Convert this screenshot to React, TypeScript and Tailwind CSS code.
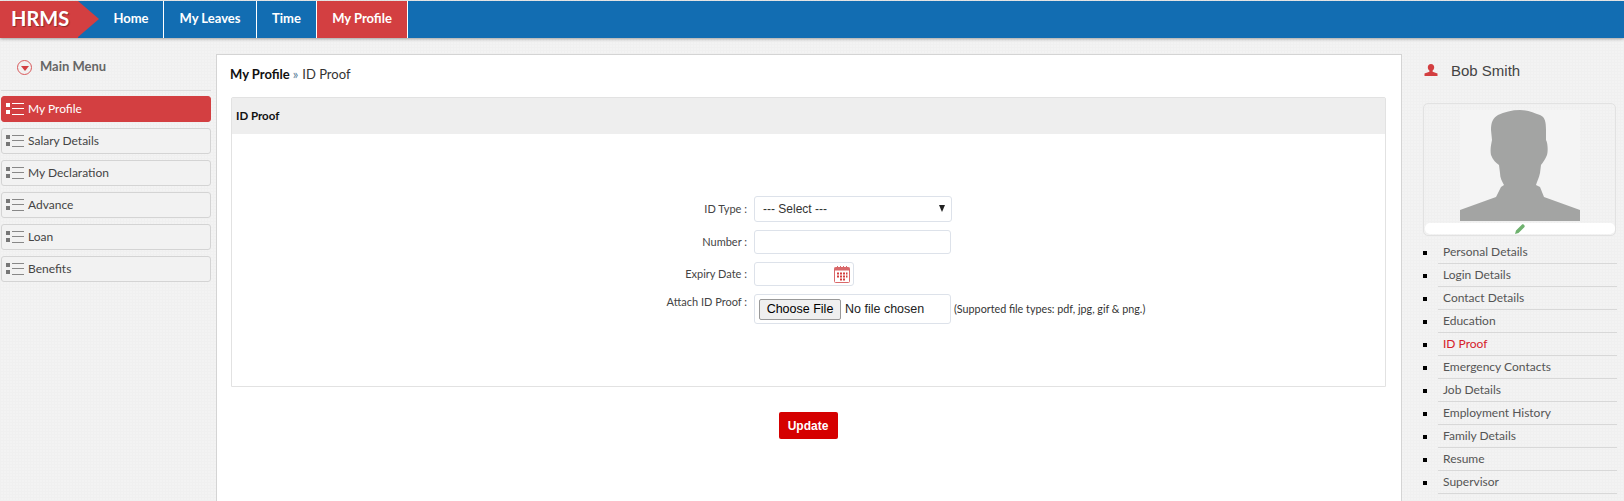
const lato = "font-['Lato','Open_Sans',sans-serif]";

const nav = [
  { label: "Home", w: "w-[65px]" },
  { label: "My Leaves", w: "w-[93px]" },
  { label: "Time", w: "w-[60px]" },
  { label: "My Profile", w: "w-[91px]", active: true },
];

const menu = ["My Profile", "Salary Details", "My Declaration", "Advance", "Loan", "Benefits"];

const links = [
  "Personal Details",
  "Login Details",
  "Contact Details",
  "Education",
  "ID Proof",
  "Emergency Contacts",
  "Job Details",
  "Employment History",
  "Family Details",
  "Resume",
  "Supervisor",
];

const ListIcon = ({ active }: { active: boolean }) => (
  <svg width="18" height="12" viewBox="0 0 18 12" aria-hidden className="shrink-0">
    <g fill={active ? "#fff" : "#777"}>
      <rect x="0" y="0" width="4" height="4" />
      <rect x="0" y="7" width="4" height="4" />
    </g>
    <g fill={active ? "#fff" : "#888"}>
      <rect x="6" y="0" width="12" height="1" />
      <rect x="6" y="5" width="12" height="1" />
      <rect x="6" y="11" width="12" height="1" />
    </g>
  </svg>
);

const Silhouette = () => (
  <svg width="120" height="111" viewBox="0 0 120 111" aria-hidden className="block">
    <path
      fill="#a3a4a3"
      d="M60 0C68 0 74 3 80 5C85 7 86 12 86 20L86 30C88 33 88 42 87 45C85 50 83 52 81 55L80 63C79 68 77 71 76 75L80 77L84 87L120 100L120 111L0 111L0 100L36 87L41 77L44 75C42 71 40 68 40 63L39 55C36 53 33 50 31 45C30 40 31 35 32 30L31 20C31 12 33 8 38 5C44 2 52 0 60 0Z"
    />
  </svg>
);

const CalendarIcon = () => (
  <svg width="16" height="17" viewBox="0 0 16 17" aria-hidden>
    <rect x="0.5" y="1.5" width="15" height="15" rx="1" fill="#fff" stroke="#d9686a" />
    <rect x="0.5" y="1.5" width="15" height="3" fill="#d9686a" />
    <g fill="#d9686a">
      <rect x="3" y="0" width="1" height="2" />
      <rect x="6" y="0" width="1" height="2" />
      <rect x="9" y="0" width="1" height="2" />
      <rect x="12" y="0" width="1" height="2" />
    </g>
    <g fill="#d43f3f">
      <rect x="3" y="6.5" width="2" height="2" />
      <rect x="6" y="6.5" width="2" height="2" />
      <rect x="9" y="6.5" width="2" height="2" />
      <rect x="12" y="6.5" width="1.5" height="2" />
      <rect x="3" y="9.5" width="2" height="2" />
      <rect x="6" y="9.5" width="2" height="2" />
      <rect x="9" y="9.5" width="2" height="2" />
      <rect x="12" y="9.5" width="1.5" height="2" />
      <rect x="6" y="12.5" width="2" height="2" />
      <rect x="9" y="12.5" width="2" height="2" />
    </g>
  </svg>
);

const labelCls = "w-[522px] shrink-0 pr-[7px] text-right text-[11px] text-[#444]";
const fieldCls = "rounded-[3px] border border-[#dde2ea] bg-white";

export default function App() {
  return (
    <div
      className={`${lato} flex h-[501px] w-[1624px] flex-col overflow-hidden bg-[#f3f3f3] bg-[repeating-linear-gradient(0deg,#f0f0f0_0px,#f0f0f0_1px,transparent_1px,transparent_3px),repeating-linear-gradient(90deg,#f0f0f0_0px,#f0f0f0_1px,transparent_1px,transparent_3px)]`}
    >
      {/* top bar */}
      <header className="mt-px flex h-[37px] shrink-0 items-stretch bg-[#126db2] shadow-[0_1px_3px_rgba(0,0,0,0.35)]">
        <div className="relative flex w-[78px] shrink-0 items-center bg-[#d33f41] pb-[3px] pl-[11px] text-[20px] font-bold text-white [text-shadow:1px_1px_1px_rgba(0,0,0,0.35)]">
          HRMS
          <span className="absolute left-full top-0 h-0 w-0 border-y-[18.5px] border-l-[21px] border-y-transparent border-l-[#d33f41]" />
        </div>
        <nav className="ml-[21px] flex">
          {nav.map((n) => (
            <a
              key={n.label}
              className={`flex ${n.w} items-center justify-center border-r border-white pb-px text-[13px] font-bold text-white ${n.active ? "bg-[#d33f41]" : ""}`}
            >
              {n.label}
            </a>
          ))}
        </nav>
      </header>

      <div className="flex min-h-0 flex-1">
        {/* left menu */}
        <aside className="w-[216px] shrink-0 pl-px pr-[5px]">
          <div className="h-[53px] border-b border-[#dcdcdc] pl-[16px] pt-[19px]">
            <div className="flex h-[20px] items-center gap-[8px]">
              <span className="flex h-[15px] w-[15px] items-center justify-center rounded-full border border-[#d9595b]">
                <span className="mt-[2px] h-0 w-0 border-x-[4px] border-t-[5px] border-x-transparent border-t-[#d33f41]" />
              </span>
              <span className="text-[13px] font-bold text-[#666]">Main Menu</span>
            </div>
          </div>
          <ul className="mt-[5px] flex flex-col gap-[6px]">
            {menu.map((m, i) => (
              <li
                key={m}
                className={`flex h-[26px] items-center gap-[4px] rounded-[3px] border pl-[4px] text-[12px] ${
                  i === 0
                    ? "border-[#d33f41] bg-[#d33f41] text-white"
                    : "border-[#d4d4d4] bg-[#f2f2f2] text-[#444]"
                }`}
              >
                <ListIcon active={i === 0} />
                {m}
              </li>
            ))}
          </ul>
        </aside>

        {/* main panel */}
        <main className="mt-[16px] w-[1186px] shrink-0 border-x border-t border-[#d4d4d4] bg-white pl-[14px] pr-[15px]">
          <h1 className="-ml-px flex h-[42px] items-center pb-[3px] text-[13px] text-[#333]">
            <b className="font-bold text-[#111]">My Profile</b>
            <span className="ml-[3px] mr-[4px] text-[#5d7f9a]">»</span>
            ID Proof
          </h1>
          <section className="h-[290px] rounded-t-[2px] border border-[#e2e2e2]">
            <div className="flex h-[36px] items-center bg-[#eeeeee] pl-[4px] text-[11.5px] font-bold text-[#111]">
              ID Proof
            </div>
            <div className="flex flex-col pt-[61px]">
              <div className="flex items-center">
                <label className={`${labelCls} pt-px`}>ID Type :</label>
                <div className="relative">
                  <select
                    className={`${fieldCls} h-[26px] w-[198px] appearance-none pl-[8px] font-['Liberation_Sans',sans-serif] text-[12px] text-[#333]`}
                  >
                    <option>--- Select ---</option>
                  </select>
                  <span className="pointer-events-none absolute right-[7px] top-[10px] h-0 w-0 border-x-[3.5px] border-t-[7px] border-x-transparent border-t-[#222]" />
                </div>
              </div>
              <div className="mt-[8px] flex items-center">
                <label className={labelCls}>Number :</label>
                <input className={`${fieldCls} h-[24px] w-[197px]`} />
              </div>
              <div className="mt-[8px] flex items-center">
                <label className={labelCls}>Expiry Date :</label>
                <div className={`${fieldCls} flex h-[24px] w-[100px] items-center justify-end pr-[3px]`}>
                  <CalendarIcon />
                </div>
              </div>
              <div className="mt-[8px] flex items-start">
                <label className={labelCls}>Attach ID Proof :</label>
                <input
                  type="file"
                  className={`${fieldCls} h-[30px] w-[197px] pl-[4px] pt-[4px] font-['Liberation_Sans',sans-serif] text-[12.5px] text-[#222] file:mr-[4px] file:h-[21px] file:w-[82px] file:rounded-[2px] file:border file:border-[#999] file:bg-[#efefef] file:text-[12.5px] file:text-black`}
                />
                <span className="ml-[3px] pt-[7px] text-[10.75px] text-[#333]">
                  (Supported file types: pdf, jpg, gif &amp; png.)
                </span>
              </div>
            </div>
          </section>
          <div className="mt-[25px] flex justify-center pr-[1px]">
            <button className="h-[27px] w-[59px] rounded-[2px] bg-[#d50000] font-['Liberation_Sans',sans-serif] text-[12px] font-bold text-white">
              Update
            </button>
          </div>
        </main>

        {/* right column */}
        <aside className="flex-1 pl-[21px] pr-[7px]">
          <div className="mt-[15px] flex h-[36px] items-center pl-[1px]">
            <svg width="14" height="12" viewBox="0 0 14 12" aria-hidden className="mb-[3px]">
              <path
                fill="#d33f41"
                d="M7 0C9 0 10.2 1.3 10.2 3.2C10.2 4.8 9.5 6 8.6 6.6L8.6 7.8L13.5 9.6L13.5 12L0.5 12L0.5 9.6L5.4 7.8L5.4 6.6C4.5 6 3.8 4.8 3.8 3.2C3.8 1.3 5 0 7 0Z"
              />
            </svg>
            <span className="ml-[13px] font-['Liberation_Sans',sans-serif] text-[15px] text-[#444]">Bob Smith</span>
          </div>
          <div className="mt-[14px] flex h-[133px] w-[193px] flex-col items-center rounded-[5px] border border-[#e2e2e2] pt-[6px]">
            <div className="bg-[#f4f4f4]">
              <Silhouette />
            </div>
            <div className="mt-[2px] flex h-[11px] w-[190px] items-center justify-center rounded-[5px] bg-white">
              <svg width="10" height="10" viewBox="0 0 10 10" aria-hidden>
                <path
                  fill="#6fb26f"
                  d="M0 10L1 6.5L6.8 .7C7.4 .1 8.2 .1 8.8 .7L9.3 1.2C9.9 1.8 9.9 2.6 9.3 3.2L3.5 9Z"
                />
              </svg>
            </div>
          </div>
          <ul className="mt-[5px]">
            {links.map((l) => (
              <li key={l} className="flex h-[23px] items-center">
                <span className="h-[4px] w-[4px] shrink-0 bg-black" />
                <span
                  className={`ml-[11px] flex h-full flex-1 items-center border-b border-[#d8d8d8] pl-[5px] text-[12px] ${
                    l === "ID Proof" ? "text-[#d5202a]" : "text-[#555]"
                  }`}
                >
                  {l}
                </span>
              </li>
            ))}
          </ul>
        </aside>
      </div>
    </div>
  );
}
